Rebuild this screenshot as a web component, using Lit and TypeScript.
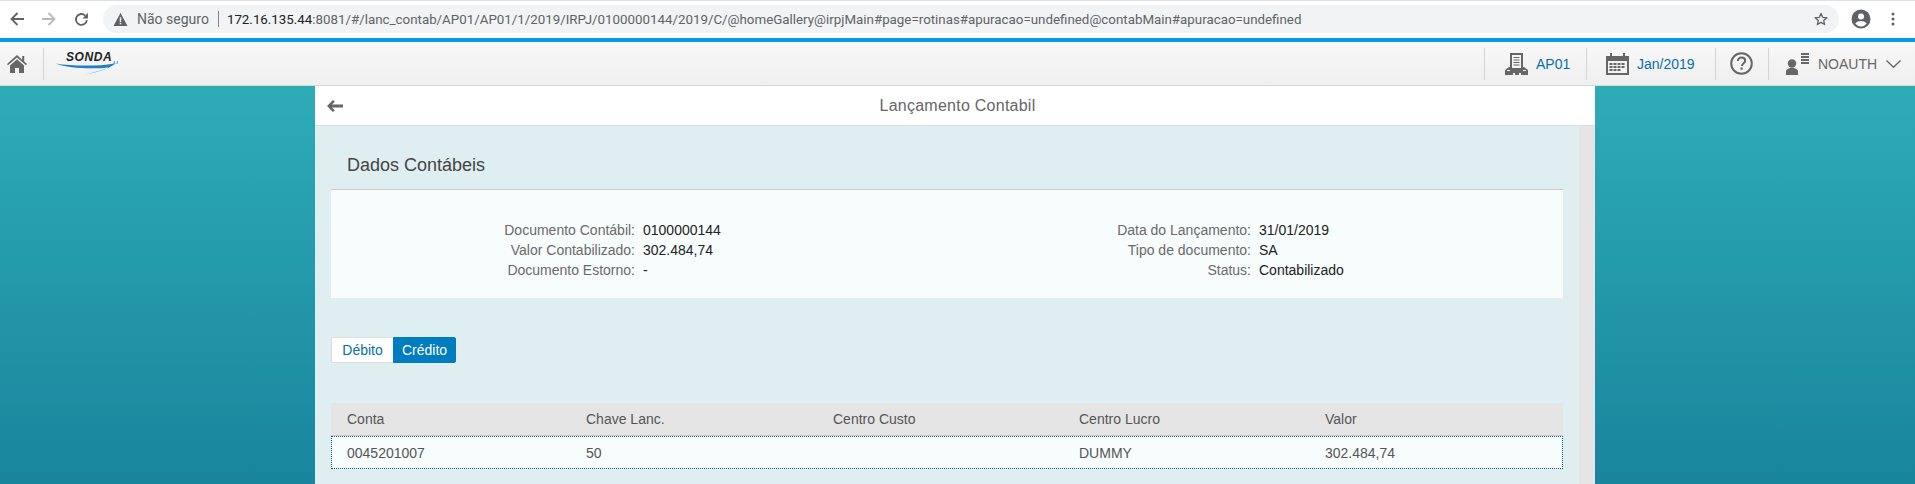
import { LitElement, html, css, svg } from "lit";
import { customElement } from "lit/decorators.js";

const INFO_LEFT = [
  ["Documento Contábil:", "0100000144"],
  ["Valor Contabilizado:", "302.484,74"],
  ["Documento Estorno:", "-"],
];
const INFO_RIGHT = [
  ["Data do Lançamento:", "31/01/2019"],
  ["Tipo de documento:", "SA"],
  ["Status:", "Contabilizado"],
];
const HEAD = ["Conta", "Chave Lanc.", "Centro Custo", "Centro Lucro", "Valor"];
const ROW = ["0045201007", "50", "", "DUMMY", "302.484,74"];

const icons = {
  back: svg`<svg width="14" height="14" viewBox="0 0 14 14"><path d="M14 7H2M7.500 1 1.500 7 7.500 13" fill="none" stroke="#5f6368" stroke-width="1.800"/></svg>`,
  fwd: svg`<svg width="14" height="14" viewBox="0 0 14 14"><path d="M0 7h12M6.500 1 12.500 7 6.500 13" fill="none" stroke="#b6b9bd" stroke-width="1.800"/></svg>`,
  reload: svg`<svg width="15" height="15" viewBox="0 0 14 14"><path d="M12 7.500A5.100 5.100 0 1 1 10.500 3.300" fill="none" stroke="#5f6368" stroke-width="1.700"/><path d="M13 .8V6H8z" fill="#5f6368"/></svg>`,
  warn: svg`<svg width="15" height="13" viewBox="0 0 13 12"><path d="M6.500 0 13 12H0z" fill="#5f6368"/><path d="M5.800 4h1.400v4.200H5.800zM5.800 9h1.400v1.400H5.800z" fill="#f1f3f4"/></svg>`,
  star: svg`<svg width="14" height="14" viewBox="0 0 24 24"><path d="M12 2.500l2.900 6.600 7.100.7-5.400 4.700 1.600 7-6.200-3.700-6.200 3.700 1.600-7L2 9.800l7.100-.7z" fill="none" stroke="#5f6368" stroke-width="2.300" stroke-linejoin="round"/></svg>`,
  profile: svg`<svg width="20" height="20" viewBox="0 0 20 20"><circle cx="10" cy="10" r="9.500" fill="#5f6368"/><circle cx="10" cy="7.500" r="3" fill="#fff"/><path d="M4.200 14.600c1.400-2 3.700-2.700 5.800-2.700s4.400.7 5.800 2.700A7.400 7.400 0 0 1 10 17.400a7.400 7.400 0 0 1-5.800-2.800z" fill="#fff"/></svg>`,
  dots: svg`<svg width="4" height="14" viewBox="0 0 4 14"><circle cx="2" cy="2" r="1.500" fill="#5f6368"/><circle cx="2" cy="7" r="1.500" fill="#5f6368"/><circle cx="2" cy="12" r="1.500" fill="#5f6368"/></svg>`,
  home: svg`<svg width="20" height="19" viewBox="0 0 20 19"><path d="M10 1 0 10l1 1.200L10 3.400l9 7.800 1-1.200-2.800-2.500V2h-2v3.700z" fill="#666"/><path d="M3 11.500 10 5.200l7 6.300V19h-5v-5H8v5H3z" fill="#666"/></svg>`,
  arrow: svg`<svg width="16" height="12" viewBox="0 0 16 12"><path d="M6 0 7.800 1.800 5 4.500h11v3H5l2.800 2.700L6 12 0 6z" fill="#666"/></svg>`,
  building: svg`<svg width="23" height="22" viewBox="0 0 23 22"><path fill-rule="evenodd" d="M5 0h13v14h1l4 3v5h-7v-2h-2v2H10v-2H8v2H0v-5l4-3h1zM7 2v13h9V2zM8.500 4h6v1h-6zM8.500 6.500h6v1h-6zM8.500 9h6v1h-6zM8.500 11.500h6v1h-6zM2 17v1h3v-1zM18 17v1h3v-1z" fill="#666"/></svg>`,
  cal: svg`<svg width="23" height="22" viewBox="0 0 23 22"><path fill-rule="evenodd" d="M0 3h4V0h2v3h11V0h2v3h4v19H0zM2 8v12h19V8zM3.500 10h3v2h-3zM7.500 10h3v2h-3zM11.500 10h3v2h-3zM15.500 10h3v2h-3zM3.500 13h3v2h-3zM7.500 13h3v2h-3zM11.500 13h3v2h-3zM15.500 13h3v2h-3zM3.500 16h3v2h-3zM7.500 16h3v2h-3zM11.500 16h3v2h-3z" fill="#666"/></svg>`,
  help: svg`<svg width="23" height="23" viewBox="0 0 23 23"><circle cx="11.500" cy="11.500" r="10.300" fill="none" stroke="#666" stroke-width="2"/><path d="M7.800 9c0-2.200 1.700-3.400 3.700-3.400s3.700 1.200 3.700 3.100c0 2.600-3.200 2.600-3.200 5.300" fill="none" stroke="#666" stroke-width="2"/><rect x="10.500" y="15.500" width="2.200" height="2.200" fill="#666"/></svg>`,
  user: svg`<svg width="23" height="22" viewBox="0 0 23 22"><circle cx="6" cy="10.500" r="4.200" fill="#666"/><path d="M0 22v-3c0-3 2.500-4 6-4s6 1 6 4v3z" fill="#666"/><path d="M15 0h8v2h-8zM15 3h8v2h-8zM15 6h8v2h-8zM15 9h8v2h-8z" fill="#666"/></svg>`,
  chevron: svg`<svg width="15" height="8" viewBox="0 0 15 8"><path d="M.5.500 7.500 7.300 14.500.500" fill="none" stroke="#666" stroke-width="1.300"/></svg>`,
  swoosh: svg`<svg width="63" height="14" viewBox="0 0 63 14"><path d="M0 2.500C10 4.500 30 5 45 4.200c6-.4 11-1.200 15-2.200-4 4-15 8.500-30 11.500C40 10.500 50 8 54 6.200 38 8.500 12 7.500 0 2.500z" fill="#1f7fc4"/><path d="M58 0l1.200.2-.7 2.800-1.200-.2zM61 0l1.200.2-.7 2.800-1.200-.2z" fill="#6aa9d8"/></svg>`,
};

@customElement("app-root")
export class AppRoot extends LitElement {
  static styles = css`
    :host { display: block; width: 1915px; height: 484px; overflow: hidden; font-family: "Liberation Sans", Arial, sans-serif; font-size: 14px; color: #666; }
    .page { display: flex; flex-direction: column; height: 484px; }
    svg { display: block; flex: none; }

    .chrome { height: 38px; box-sizing: border-box; border-top: 1px solid #dee1e6; background: #fff; display: flex; align-items: flex-start; padding-top: 4px; }
    .nav { width: 103px; height: 28px; display: flex; align-items: center; padding-left: 10px; gap: 18px; box-sizing: border-box; flex: none; }
    .omni { width: 1736px; height: 28px; border-radius: 14px; background: #f1f3f4; display: flex; align-items: center; padding-left: 10px; box-sizing: border-box; font-family: Roboto, sans-serif; flex: none; }
    .insecure { color: #5f6368; margin-left: 9px; font-size: 14px; }
    .divider { width: 1px; height: 16px; background: #80868b; margin: 0 8px 0 9px; }
    .url { color: #5f6368; font-size: 13.330px; white-space: nowrap; flex: 1; }
    .url b { font-weight: 400; color: #202124; }
    .star { margin-right: 11px; }
    .end { flex: 1; height: 28px; display: flex; align-items: center; padding-left: 12px; gap: 20px; }

    .bluebar { height: 4px; background: #009de0; flex: none; }
    .shell { height: 44px; box-sizing: border-box; flex: none; display: flex; align-items: center; border-bottom: 1px solid #d9d9d9; background: linear-gradient(#f8f8f8, #efefef); }
    .homebtn { width: 43px; padding-left: 7px; box-sizing: border-box; flex: none; }
    .sec { height: 32px; box-sizing: border-box; border-left: 1px solid #d4d4d4; display: flex; align-items: center; flex: none; }
    .logo { width: 100px; padding-left: 12px; }
    .logo-box { position: relative; width: 63px; height: 21px; }
    .logo-text { font: italic bold 12px/9px "Liberation Sans", Arial, sans-serif; color: #222; padding-left: 10px; letter-spacing: .6px; }
    .swoosh { position: absolute; left: 0; top: 8px; }
    .spacer { flex: 1; }
    .a { width: 102px; padding-left: 20px; gap: 8px; }
    .b { width: 129px; padding-left: 19px; gap: 8px; }
    .c { width: 53px; padding-left: 14px; }
    .d { width: 147px; padding-left: 17px; gap: 9px; }
    .link { color: #0a6ea8; }
    .name { color: #666; }

    .stage { flex: 1; min-height: 0; background: linear-gradient(#2eacb6, #18859d); display: flex; justify-content: center; padding-right: 5px; }
    .panel { width: 1280px; display: flex; flex-direction: column; }
    .titlebar { height: 40px; flex: none; box-sizing: border-box; background: #fff; border-bottom: 1px solid #ddd; display: flex; align-items: center; position: relative; justify-content: center; padding-left: 5px; font-size: 16px; letter-spacing: .25px; color: #666; }
    .backbtn { position: absolute; left: 12px; top: 14px; }
    .body { flex: 1; min-height: 0; display: flex; background: #dfeff1; }
    .content { flex: 1; padding: 0 16px; min-width: 0; }
    .scroll { width: 16px; background: #e5e5e5; flex: none; }

    h2 { margin: 0; padding: 27px 16px 12px; font-size: 18px; line-height: 24px; font-weight: 400; color: #444; }
    .form { height: 109px; box-sizing: border-box; border-top: 1px solid #ccc; background: #f7fcfd; padding-top: 30px; display: grid; grid-template-columns: 1fr 1fr; }
    .info { display: grid; grid-template-columns: 304px 1fr; column-gap: 8px; grid-auto-rows: 20px; line-height: 20px; }
    .info .k { text-align: right; color: #6a6a6a; }
    .info .v { color: #222; }

    .seg { display: flex; margin: 39px 0 40px; height: 26px; }
    .seg div { box-sizing: border-box; height: 26px; line-height: 24px; text-align: center; }
    .deb { width: 62px; background: #fff; border: 1px solid #ddd; border-right: 0; border-radius: 2px 0 0 2px; color: #0a6ea8; }
    .cre { width: 63px; background: #007cc0; border: 1px solid #007cc0; border-radius: 0 2px 2px 0; color: #fff; }

    .grid { display: grid; grid-template-columns: 239px 247px 246px 246px 1fr; }
    .thead { height: 33px; background: #e5e5e5; border-bottom: 1px solid #ccc; box-sizing: border-box; align-items: center; color: #555; }
    .thead div, .trow div { padding-left: 16px; }
    .trow { height: 33px; box-sizing: border-box; background: #f7fcfd; border: 1px dotted #005a8c; align-items: center; color: #555; grid-template-columns: 238px 247px 246px 246px 1fr; }
    .trow div:first-child { padding-left: 15px; }
  `;

  private info(rows: string[][]) {
    return html`<div class="info">${rows.map(([k, v]) => html`<div class="k">${k}</div><div class="v">${v}</div>`)}</div>`;
  }

  render() {
    return html`<div class="page">
      <div class="chrome">
        <div class="nav">${icons.back}${icons.fwd}${icons.reload}</div>
        <div class="omni">
          ${icons.warn}<span class="insecure">Não seguro</span><span class="divider"></span>
          <span class="url"><b>172.16.135.44</b>:8081/#/lanc_contab/AP01/AP01/1/2019/IRPJ/0100000144/2019/C/@homeGallery@irpjMain#page=rotinas#apuracao=undefined@contabMain#apuracao=undefined</span>
          <span class="star">${icons.star}</span>
        </div>
        <div class="end">${icons.profile}${icons.dots}</div>
      </div>
      <div class="bluebar"></div>
      <div class="shell">
        <div class="homebtn">${icons.home}</div>
        <div class="sec logo"><div class="logo-box"><div class="logo-text">SONDA</div><span class="swoosh">${icons.swoosh}</span></div></div>
        <div class="spacer"></div>
        <div class="sec a">${icons.building}<span class="link">AP01</span></div>
        <div class="sec b">${icons.cal}<span class="link">Jan/2019</span></div>
        <div class="sec c">${icons.help}</div>
        <div class="sec d">${icons.user}<span class="name">NOAUTH</span>${icons.chevron}</div>
      </div>
      <div class="stage">
        <div class="panel">
          <div class="titlebar"><span class="backbtn">${icons.arrow}</span>Lançamento Contabil</div>
          <div class="body">
            <div class="content">
              <h2>Dados Contábeis</h2>
              <div class="form">${this.info(INFO_LEFT)}${this.info(INFO_RIGHT)}</div>
              <div class="seg"><div class="deb">Débito</div><div class="cre">Crédito</div></div>
              <div class="grid thead">${HEAD.map((h) => html`<div>${h}</div>`)}</div>
              <div class="grid trow">${ROW.map((c) => html`<div>${c}</div>`)}</div>
            </div>
            <div class="scroll"></div>
          </div>
        </div>
      </div>
    </div>`;
  }
}
